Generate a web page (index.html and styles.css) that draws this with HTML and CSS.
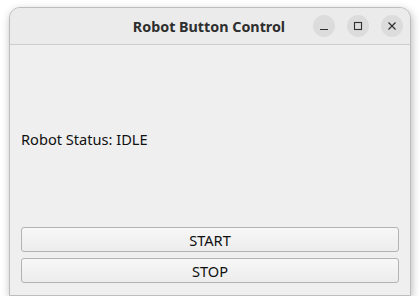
FILE: index.html
```html
<!DOCTYPE html>
<html lang="en">
<head>
    <meta charset="UTF-8">
    <title>Robot Button Control</title>
    <link rel="stylesheet" href="styles.css">
</head>
<body>

    <div class="window">
        <!-- Title bar -->
        <div class="titlebar">
            <span class="title">Robot Button Control</span>
            <div class="controls">
                <span class="ctl">
                    <svg width="10" height="10" viewBox="0 0 10 10"><path d="M1 8.5h8" stroke="#2e2e2e" stroke-width="1.2"/></svg>
                </span>
                <span class="ctl">
                    <svg width="10" height="10" viewBox="0 0 10 10"><rect x="1.5" y="1.5" width="7" height="7" fill="none" stroke="#2e2e2e" stroke-width="1.1"/></svg>
                </span>
                <span class="ctl">
                    <svg width="10" height="10" viewBox="0 0 10 10"><path d="M1.5 1.5l7 7M8.5 1.5l-7 7" stroke="#2e2e2e" stroke-width="1.2"/></svg>
                </span>
            </div>
        </div>

        <!-- Content -->
        <div class="content">
            <div class="status">Robot Status: IDLE</div>
            <button class="btn">START</button>
            <button class="btn">STOP</button>
        </div>
    </div>

</body>
</html>
```
FILE: styles.css
```css
body {
    margin: 0;
    background: #ffffff;
    font-family: "Noto Sans", "Open Sans", sans-serif;
}

.window {
    margin: 7px 0 0 9px;
    width: 400px;
    border: 1px solid #bdbdbd;
    border-radius: 11px 11px 0 0;
    background: #efefef;
    box-shadow: 1px 3px 9px rgba(0, 0, 0, 0.28);
    overflow: hidden;
}

.titlebar {
    height: 36px;
    background: #ebebeb;
    border-bottom: 1px solid #cdcdcd;
    display: flex;
    align-items: center;
    justify-content: center;
    position: relative;
}

.title {
    font-size: 14.3px;
    font-weight: bold;
    color: #2e2e2e;
    margin-left: -2px;
}

.controls {
    position: absolute;
    right: 7px;
    top: 7px;
    display: flex;
    gap: 12px;
}

.ctl {
    width: 22px;
    height: 22px;
    border-radius: 50%;
    background: #dcdcdc;
    display: flex;
    align-items: center;
    justify-content: center;
}

.content {
    height: 250px;
    box-sizing: border-box;
    padding: 11px 11px 12px 11px;
    display: flex;
    flex-direction: column;
    gap: 6px;
}

.status {
    flex: 1;
    display: flex;
    align-items: center;
    font-size: 14.6px;
    color: #101010;
}

.btn {
    height: 25px;
    font-family: "Noto Sans", "Open Sans", sans-serif;
    font-size: 14.6px;
    color: #101010;
    border: 1px solid #b3b3b3;
    border-radius: 3px;
    background: linear-gradient(#f7f7f7, #ececec);
    padding: 0;
}
```
